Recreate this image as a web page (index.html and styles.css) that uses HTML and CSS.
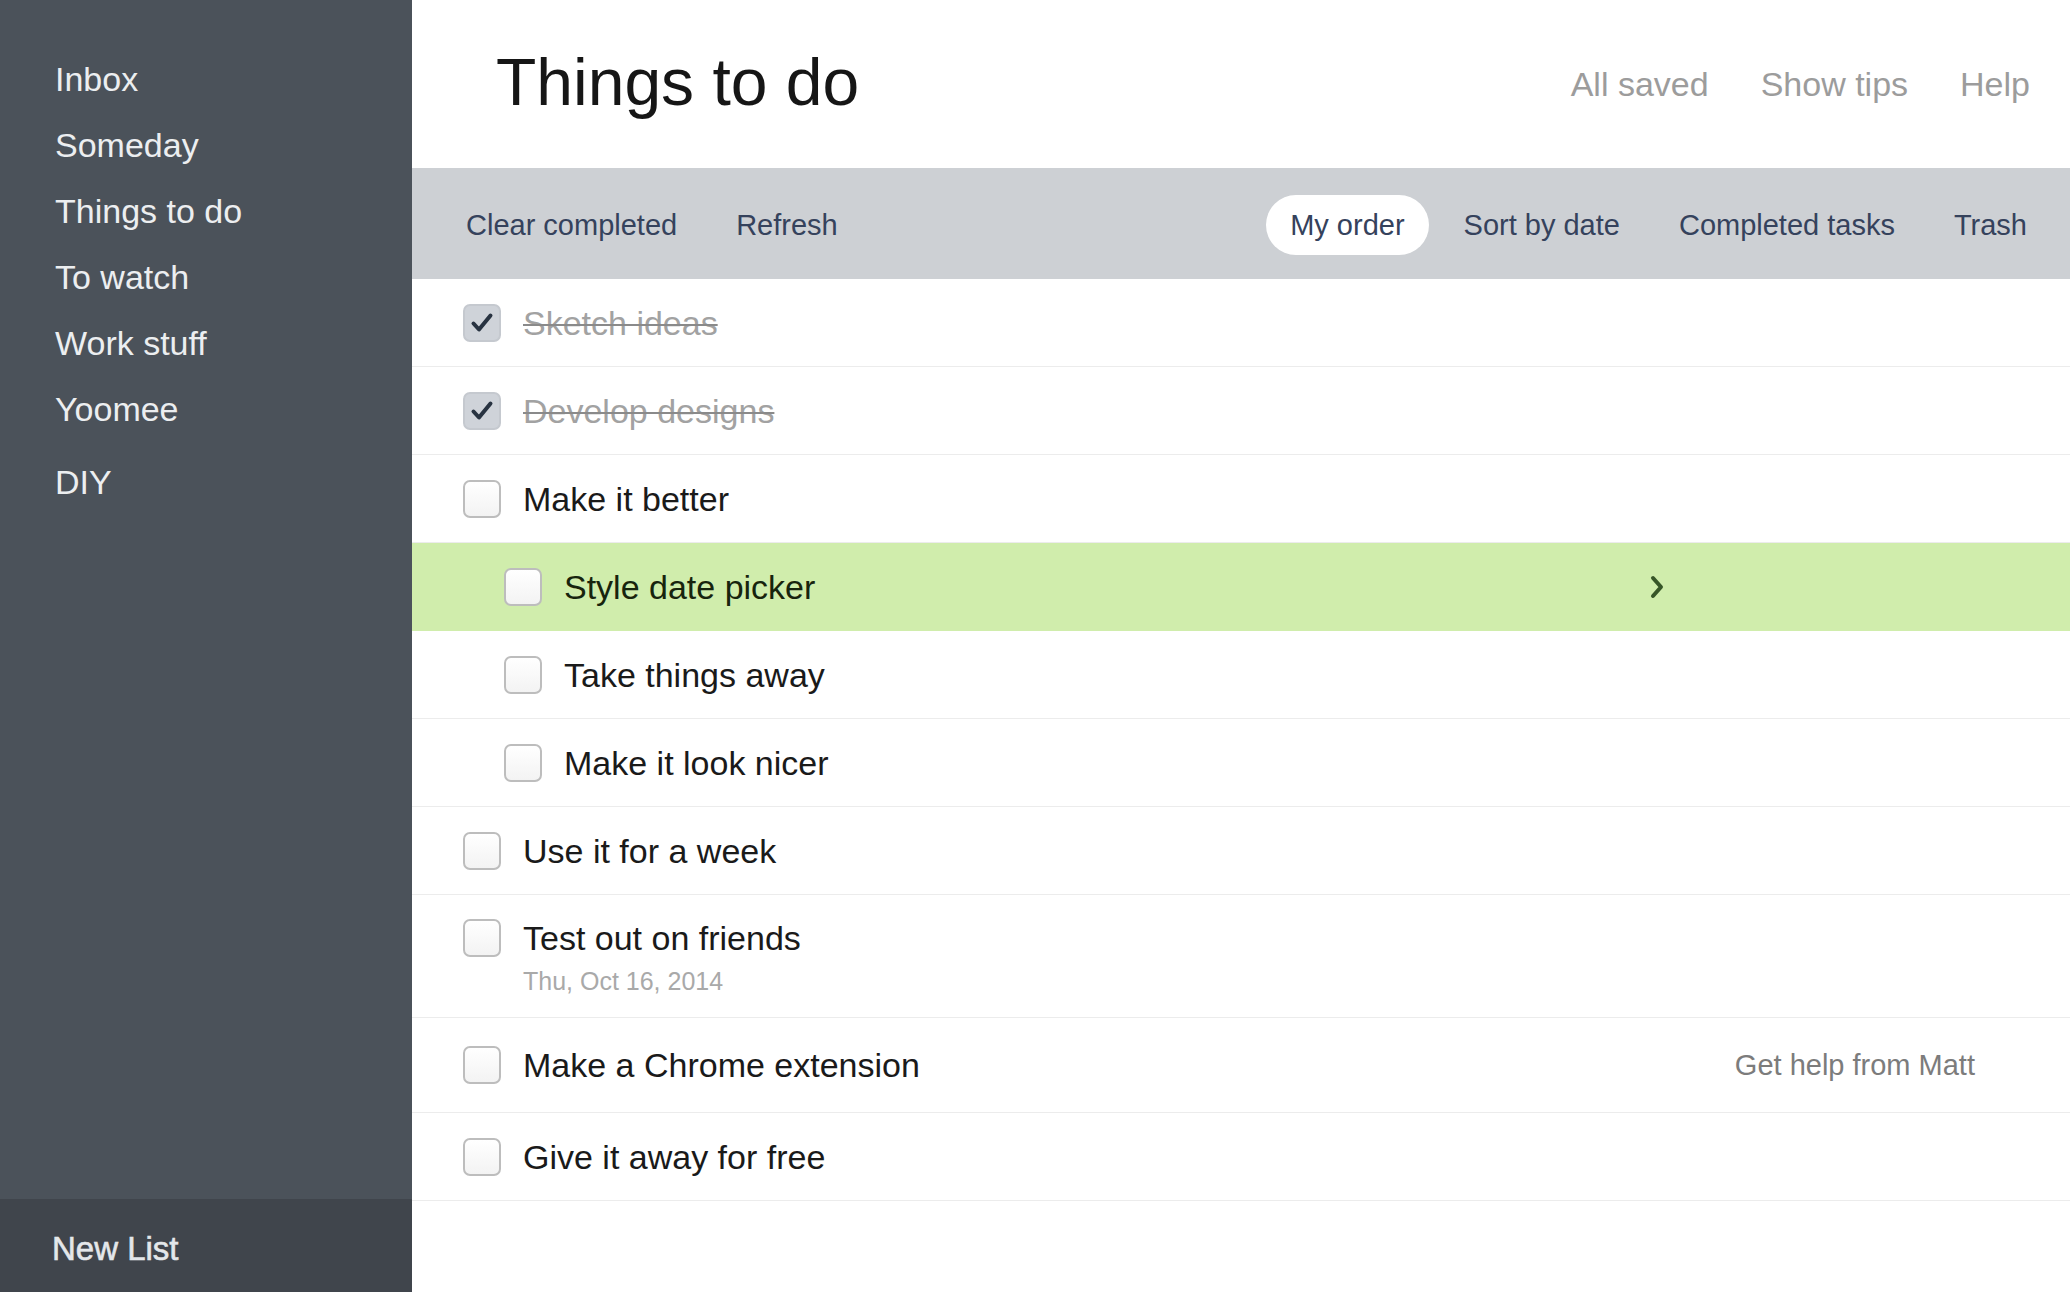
FILE: index.html
```html
<!DOCTYPE html>
<html lang="en">
<head>
    <meta charset="UTF-8">
    <meta name="viewport" content="width=device-width, initial-scale=1.0">
    <title>Things to do</title>
    <link rel="stylesheet" href="styles.css">
</head>
<body>
    <aside class="sidebar">
        <nav class="lists">
            <a class="list-link" href="#">Inbox</a>
            <a class="list-link" href="#">Someday</a>
            <a class="list-link" href="#">Things to do</a>
            <a class="list-link" href="#">To watch</a>
            <a class="list-link" href="#">Work stuff</a>
            <a class="list-link" href="#">Yoomee</a>
            <a class="list-link list-link-spaced" href="#">DIY</a>
        </nav>
        <a class="new-list" href="#">New List</a>
    </aside>

    <main class="main">
        <header class="header">
            <h1 class="title">Things to do</h1>
            <div class="header-links">
                <span>All saved</span>
                <a href="#">Show tips</a>
                <a href="#">Help</a>
            </div>
        </header>

        <div class="toolbar">
            <div class="toolbar-group">
                <a class="tool" href="#">Clear completed</a>
                <a class="tool" href="#">Refresh</a>
            </div>
            <div class="toolbar-group toolbar-right">
                <a class="tool active" href="#">My order</a>
                <a class="tool" href="#">Sort by date</a>
                <a class="tool" href="#">Completed tasks</a>
                <a class="tool" href="#">Trash</a>
            </div>
        </div>

        <ul class="tasks">
            <li class="task done">
                <span class="check checked">
                    <svg viewBox="0 0 34 34"><path d="M8.5 17.5 L14 23.5 L25.5 9.5"/></svg>
                </span>
                <span class="task-title">Sketch ideas</span>
            </li>
            <li class="task done">
                <span class="check checked">
                    <svg viewBox="0 0 34 34"><path d="M8.5 17.5 L14 23.5 L25.5 9.5"/></svg>
                </span>
                <span class="task-title">Develop designs</span>
            </li>
            <li class="task">
                <span class="check"></span>
                <span class="task-title">Make it better</span>
            </li>
            <li class="task sub selected">
                <span class="check"></span>
                <span class="task-title">Style date picker</span>
                <span class="task-open">
                    <svg viewBox="0 0 16 26"><path d="M4 4 L12 13 L4 22"/></svg>
                </span>
            </li>
            <li class="task sub">
                <span class="check"></span>
                <span class="task-title">Take things away</span>
            </li>
            <li class="task sub">
                <span class="check"></span>
                <span class="task-title">Make it look nicer</span>
            </li>
            <li class="task">
                <span class="check"></span>
                <span class="task-title">Use it for a week</span>
            </li>
            <li class="task dated">
                <span class="check"></span>
                <div class="task-body">
                    <span class="task-title">Test out on friends</span>
                    <span class="task-date">Thu, Oct 16, 2014</span>
                </div>
            </li>
            <li class="task tall">
                <span class="check"></span>
                <span class="task-title">Make a Chrome extension</span>
                <span class="task-note">Get help from Matt</span>
            </li>
            <li class="task">
                <span class="check"></span>
                <span class="task-title">Give it away for free</span>
            </li>
        </ul>
    </main>
</body>
</html>
```

FILE: styles.css
```css
* {
    box-sizing: border-box;
}

html, body {
    height: 100%;
}

body {
    margin: 0;
    display: flex;
    font-family: "Liberation Sans", Arial, Helvetica, sans-serif;
    color: #1a1a1a;
    background: #fff;
    overflow: hidden;
}

a {
    color: inherit;
    text-decoration: none;
}

/* sidebar */

.sidebar {
    width: 412px;
    flex-shrink: 0;
    display: flex;
    flex-direction: column;
    background: #4b525a;
    color: #eceef0;
}

.lists {
    display: flex;
    flex-direction: column;
    padding: 46px 0 0 55px;
}

.list-link {
    font-size: 34px;
    line-height: 66px;
}

.list-link-spaced {
    margin-top: 7px;
}

.new-list {
    margin-top: auto;
    height: 93px;
    line-height: 93px;
    padding: 3px 0 0 52px;
    background: #40454c;
    font-size: 33px;
    color: #e4e7ea;
    -webkit-text-stroke: 0.6px #e4e7ea;
}

/* main */

.main {
    flex: 1;
    display: flex;
    flex-direction: column;
    min-width: 0;
}

.header {
    height: 168px;
    display: flex;
    align-items: center;
    padding: 0 40px 0 84px;
}

.title {
    margin: 0 0 4px;
    font-size: 66px;
    font-weight: normal;
    color: #161616;
}

.header-links {
    margin-left: auto;
    display: flex;
    gap: 52px;
    font-size: 34px;
    color: #9c9c9c;
}

.toolbar {
    height: 111px;
    display: flex;
    align-items: center;
    padding: 3px 19px 0 30px;
    background: #cdd0d4;
}

.toolbar-group {
    display: flex;
    align-items: center;
    gap: 11px;
}

.toolbar-right {
    margin-left: auto;
}

.tool {
    height: 60px;
    line-height: 60px;
    padding: 0 24px;
    border-radius: 30px;
    font-size: 29px;
    color: #35425c;
}

.tool.active {
    background: #fff;
}

/* tasks */

.tasks {
    list-style: none;
    margin: 0;
    padding: 0;
}

.task {
    min-height: 88px;
    display: flex;
    align-items: center;
    padding-left: 51px;
    border-bottom: 1px solid #ececec;
    font-size: 34px;
}

.task.sub {
    padding-left: 92px;
}

.task.selected {
    background: #d0edac;
    border-bottom-color: #d0edac;
    color: #17240d;
}

.task.tall {
    min-height: 95px;
}

.task.dated {
    align-items: flex-start;
    padding-top: 24px;
    padding-bottom: 21px;
}

.check {
    width: 38px;
    height: 38px;
    flex-shrink: 0;
    margin-right: 22px;
    border: 2px solid #bdbdbd;
    border-radius: 7px;
    background: linear-gradient(#fff, #f3f3f3);
}

.check.checked {
    background: #cfd3d9;
    border-color: #c5c9cf;
}

.check svg {
    display: block;
    width: 34px;
    height: 34px;
    fill: none;
    stroke: #283341;
    stroke-width: 4;
    stroke-linecap: round;
    stroke-linejoin: round;
}

.task-title {
    line-height: 38px;
}

.task.done .task-title {
    color: #a2a2a2;
    text-decoration: line-through;
    text-decoration-color: #8a8a8a;
    text-decoration-thickness: 2px;
}

.task-body {
    display: flex;
    flex-direction: column;
}

.task-date {
    margin-top: 9px;
    line-height: 30px;
    font-size: 25px;
    color: #a9a9a9;
}

.task-open {
    margin-left: auto;
    margin-right: 405px;
    display: flex;
}

.task-open svg {
    width: 16px;
    height: 26px;
    fill: none;
    stroke: #375628;
    stroke-width: 4;
    stroke-linecap: round;
    stroke-linejoin: round;
}

.task-note {
    margin-left: auto;
    margin-right: 95px;
    font-size: 29px;
    color: #7c7c7c;
}
```
